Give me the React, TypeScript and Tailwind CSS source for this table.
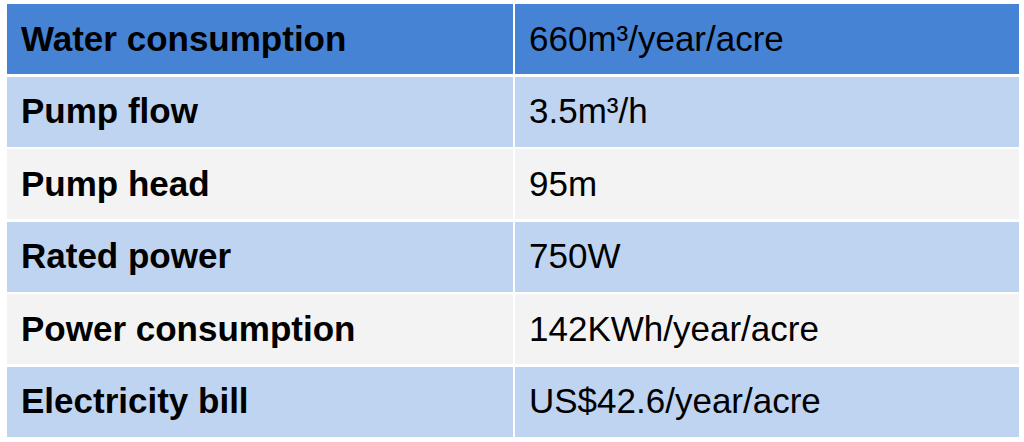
import React from 'react';

const rows = [
  { label: 'Water consumption', value: '660m³/year/acre', bg: 'bg-[#4683d5]' },
  { label: 'Pump flow', value: '3.5m³/h', bg: 'bg-[#bfd4f0]' },
  { label: 'Pump head', value: '95m', bg: 'bg-[#f3f3f3]' },
  { label: 'Rated power', value: '750W', bg: 'bg-[#bfd4f0]' },
  { label: 'Power consumption', value: '142KWh/year/acre', bg: 'bg-[#f3f3f3]' },
  { label: 'Electricity bill', value: 'US$42.6/year/acre', bg: 'bg-[#bfd4f0]' },
];

export default function App() {
  return (
    <div className="w-[1024px] h-[442px] bg-white pt-[4px] pl-[7px] overflow-hidden font-['Liberation_Sans',Arial,sans-serif] text-[35px] text-black">
      <div className="grid grid-cols-[506px_504px] gap-x-[2px] gap-y-[2.5px]">
        {rows.map((row) => (
          <React.Fragment key={row.label}>
            <div className={`${row.bg} h-[70px] flex items-center pl-[14px] font-bold`}>{row.label}</div>
            <div className={`${row.bg} h-[70px] flex items-center pl-[14px]`}>{row.value}</div>
          </React.Fragment>
        ))}
      </div>
    </div>
  );
}
